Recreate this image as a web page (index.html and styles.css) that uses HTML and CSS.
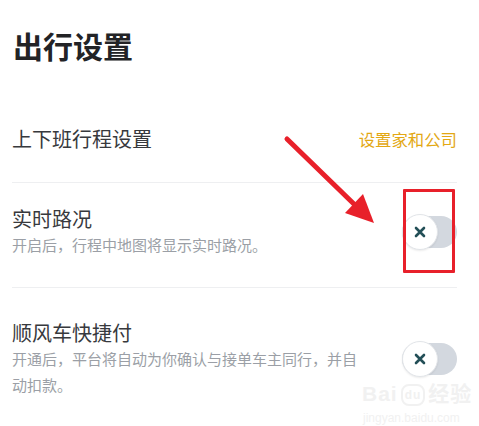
FILE: index.html
```html
<!DOCTYPE html>
<html lang="zh-CN">
<head>
<meta charset="utf-8">
<link rel="stylesheet" href="styles.css">
</head>
<body>
<main class="page">
  <h1 class="title">出行设置</h1>
  <div class="row row-commute">
    <span class="label">上下班行程设置</span>
    <span class="link">设置家和公司</span>
  </div>
  <div class="row row-traffic">
    <div class="text">
      <div class="label">实时路况</div>
      <div class="desc">开启后，行程中地图将显示实时路况。</div>
    </div>
    <div class="toggle">
      <div class="track"></div>
      <div class="knob"><svg viewBox="0 0 12 12" width="12" height="12"><path d="M2 2L10 10M10 2L2 10" stroke="#234f57" stroke-width="2.6" stroke-linecap="round"/></svg></div>
    </div>
  </div>
  <div class="row row-pay">
    <div class="text text-narrow">
      <div class="label">顺风车快捷付</div>
      <div class="desc">开通后，平台将自动为你确认与接单车主同行，并自动扣款。</div>
    </div>
    <div class="toggle">
      <div class="track"></div>
      <div class="knob"><svg viewBox="0 0 12 12" width="12" height="12"><path d="M2 2L10 10M10 2L2 10" stroke="#234f57" stroke-width="2.6" stroke-linecap="round"/></svg></div>
    </div>
  </div>
</main>
<div class="highlight"></div>
<svg class="arrow" width="479" height="426" viewBox="0 0 479 426">
  <line x1="287" y1="139" x2="356" y2="206" stroke="#e8202a" stroke-width="5" stroke-linecap="round"/>
  <polygon points="374,223 345,213 363,194" fill="#e8202a"/>
</svg>
<div class="watermark">
  <div class="wm-logo">Bai<span class="wm-du">du</span>经验</div>
  <div class="wm-url">jingyan.baidu.com</div>
</div>
</body>
</html>
```

FILE: styles.css
```css
html, body {
  margin: 0;
  padding: 0;
  background: #ffffff;
}
body {
  width: 479px;
  height: 426px;
  overflow: hidden;
  position: relative;
  font-family: "Noto Sans CJK SC", "Noto Sans", sans-serif;
}
.page {
  padding: 25px 22px 0 12px;
}
.title {
  margin: 0 0 31px 1px;
  font-size: 30px;
  line-height: 40px;
  font-weight: 700;
  color: #222326;
}
.row {
  display: flex;
  align-items: center;
  justify-content: space-between;
  border-bottom: 1px solid #eeeff1;
}
.row-commute {
  padding: 29px 0 29px 0;
}
.row-traffic {
  padding: 23px 0 29px 0;
}
.row-pay {
  padding: 32px 0 20px 0;
  border-bottom: none;
}
.label {
  font-size: 20px;
  line-height: 26px;
  color: #37393d;
}
.row-commute .label {
  line-height: 28px;
}
.link {
  font-size: 16.4px;
  line-height: 28px;
  color: #e3a814;
}
.desc {
  font-size: 15px;
  line-height: 26px;
  color: #9b9fa6;
}
.text-narrow {
  max-width: 352px;
}
.toggle {
  position: relative;
  width: 55px;
  height: 36px;
  flex-shrink: 0;
}
.track {
  margin-top: 2px;
  height: 32px;
  border-radius: 16px;
  background: #d3d8df;
}
.knob {
  position: absolute;
  left: 0;
  top: 0;
  width: 34px;
  height: 34px;
  border-radius: 50%;
  background: #ffffff;
  border: 1px solid #e2e5e9;
  box-shadow: 0 1px 2px rgba(0, 0, 0, 0.08);
  display: flex;
  align-items: center;
  justify-content: center;
}
.knob svg {
  display: block;
}
.highlight {
  position: absolute;
  left: 403px;
  top: 189px;
  width: 46px;
  height: 78px;
  border: 3.5px solid #e8202a;
  border-radius: 1px;
}
.arrow {
  position: absolute;
  left: 0;
  top: 0;
}
.watermark {
  position: absolute;
  left: 362px;
  top: 383px;
  color: #f1f1f1;
  font-family: "Liberation Sans", "Noto Sans CJK SC", sans-serif;
}
.wm-logo {
  font-size: 21px;
  line-height: 22px;
  font-weight: 700;
  letter-spacing: 1px;
}
.wm-du {
  display: inline-block;
  font-size: 12px;
  line-height: 18px;
  padding: 0 2px;
  margin: 0 3px;
  border: 2px solid #f1f1f1;
  border-radius: 8px;
  vertical-align: 2px;
}
.wm-url {
  font-size: 12px;
  line-height: 16px;
  margin-top: 4px;
  margin-left: 1px;
}
```
